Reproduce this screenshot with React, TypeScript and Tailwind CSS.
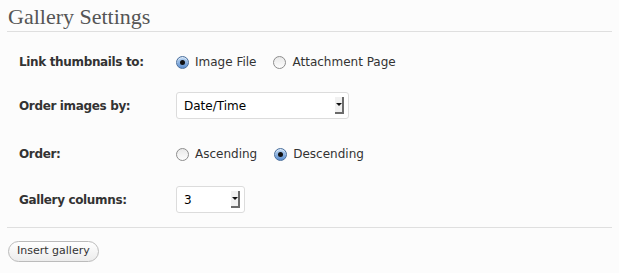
import React from 'react';

const Radio: React.FC<{ checked?: boolean; label: string }> = ({ checked, label }) => (
    <label className="flex items-center gap-[6px]">
        {checked ? (
            <span className="w-[13px] h-[13px] rounded-full border border-[#4a6f9c] bg-gradient-to-b from-[#bcd6f2] to-[#5d8fcf] flex items-center justify-center shadow-[inset_0_1px_1px_rgba(255,255,255,0.6)]">
                <span className="w-[5px] h-[5px] rounded-full bg-[#111]"></span>
            </span>
        ) : (
            <span className="w-[13px] h-[13px] rounded-full border border-[#8d8d8d] bg-gradient-to-b from-[#e9e9e9] to-[#fdfdfd]"></span>
        )}
        <span>{label}</span>
    </label>
);

const Select: React.FC<{ value: string; width: string }> = ({ value, width }) => (
    <div className={`${width} h-[27px] border border-[#dcdcdc] rounded-[3px] bg-white flex items-center justify-between pl-[7px] pr-[4px]`}>
        <span className="text-[12px] text-black">{value}</span>
        <span className="w-[9px] h-[17px] border-r-2 border-b-2 border-[#6b6b6b] bg-[#f1f1f1] flex items-center justify-center">
            <span className="w-0 h-0 border-l-[3px] border-r-[3px] border-t-[3px] border-l-transparent border-r-transparent border-t-[#111]"></span>
        </span>
    </div>
);

const App: React.FC = () => {
    return (
        <div className="w-[619px] h-[273px] bg-[#fcfcfc] text-[#333] pt-[4px]" style={{ fontFamily: '"DejaVu Sans", sans-serif' }}>
            <div className="mx-[7px] border-b border-[#dfdfdf] pb-[1px]">
                <h3 className="text-[22px] text-[#555] leading-[26px] pl-[1px]" style={{ fontFamily: '"Liberation Serif", serif' }}>
                    Gallery Settings
                </h3>
            </div>
            <div className="mx-[7px] border-b border-[#dfdfdf] pl-[12px] pt-[17px] pb-[14px] text-[12px]">
                <div className="flex items-center h-[26px]">
                    <div className="w-[157px] font-bold tracking-[-0.35px]">Link thumbnails to:</div>
                    <div className="flex items-center gap-[17px]">
                        <Radio checked label="Image File" />
                        <Radio label="Attachment Page" />
                    </div>
                </div>
                <div className="flex items-center h-[27px] mt-[17px]">
                    <div className="w-[157px] font-bold tracking-[-0.35px]">Order images by:</div>
                    <Select value="Date/Time" width="w-[173px]" />
                </div>
                <div className="flex items-center h-[26px] mt-[22px]">
                    <div className="w-[157px] font-bold tracking-[-0.35px]">Order:</div>
                    <div className="flex items-center gap-[17px]">
                        <Radio label="Ascending" />
                        <Radio checked label="Descending" />
                    </div>
                </div>
                <div className="flex items-center h-[27px] mt-[19px]">
                    <div className="w-[157px] font-bold tracking-[-0.35px]">Gallery columns:</div>
                    <Select value="3" width="w-[69px]" />
                </div>
            </div>
            <div className="pl-[8px] pt-[9px]">
                <button className="h-[21px] px-[8px] rounded-full border border-[#bbb] bg-gradient-to-b from-white to-[#ececec] text-[11px] text-[#333]">
                    Insert gallery
                </button>
            </div>
        </div>
    );
};

export default App;
